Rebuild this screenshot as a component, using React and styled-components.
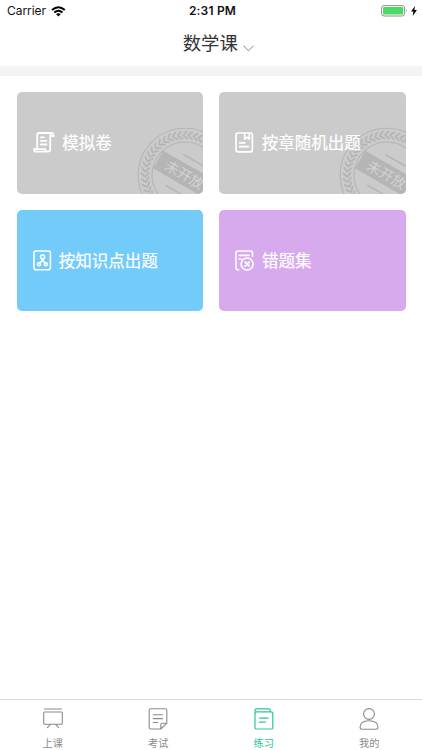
import React from "react";
import styled, { createGlobalStyle } from "styled-components";

const Global = createGlobalStyle`
  * { box-sizing: border-box; }
  body { margin: 0; background: #fff; }
`;

const Screen = styled.div`
  display: flex;
  flex-direction: column;
  width: 100%;
  height: 100vh;
  overflow: hidden;
  font-family: Roboto, "Noto Sans CJK SC", sans-serif;
  svg { display: block; flex: none; }
`;

const StatusBar = styled.div`
  display: grid;
  grid-template-columns: 1fr auto 1fr;
  align-items: center;
  height: 22px;
  padding: 0 5px 0 7px;
  font: 12px/22px Inter, sans-serif;
  color: #111;
`;

const Signal = styled.div`
  display: flex;
  align-items: center;
  gap: 5px;
  letter-spacing: -0.05px;
`;

const Clock = styled.div`
  font-weight: 600;
  letter-spacing: 0.2px;
  padding-left: 1px;
`;

const Power = styled.div`
  display: flex;
  justify-content: flex-end;
  align-items: center;
  gap: 3px;
`;

const Header = styled.header`
  display: flex;
  align-items: center;
  justify-content: center;
  gap: 5px;
  height: 43.5px;
  padding-left: 14.5px;
`;

const Title = styled.h1`
  margin: 0;
  font-size: 18.4px;
  line-height: 42px;
  font-weight: 400;
  color: #333;
`;

const Arrow = styled.svg`
  margin-top: 9px;
`;

const Divider = styled.div`
  height: 10px;
  background: #f4f4f4;
`;

const Cards = styled.main`
  flex: 1;
  display: grid;
  grid-template-columns: 1fr 1fr;
  grid-auto-rows: 101.5px;
  align-content: start;
  gap: 16px;
  padding: 16.5px;
`;

const Card = styled.div`
  position: relative;
  display: flex;
  align-items: center;
  gap: ${(p) => p.$gap}px;
  padding-left: 16px;
  border-radius: 5px;
  overflow: hidden;
  color: #fff;
  background: ${(p) => p.$color};
`;

const CardLabel = styled.span`
  position: relative;
  padding-top: 3px;
  font-size: 16.5px;
  line-height: 24px;
  font-weight: 400;
  -webkit-text-stroke: 0.2px currentColor;
  white-space: nowrap;
`;

const StampSvg = styled.svg`
  position: absolute;
  left: 120px;
  top: 34.5px;
`;

const TabBar = styled.nav`
  display: grid;
  grid-template-columns: repeat(4, 1fr);
  height: 51.5px;
  border-top: 1px solid #d9d9d9;
`;

const Tab = styled.div`
  display: flex;
  flex-direction: column;
  align-items: center;
  padding-top: 8px;
  gap: 7px;
  color: ${(p) => (p.$active ? "#2ec495" : "#8a8a8a")};
`;

const TabLabel = styled.span`
  font-size: 10.2px;
  line-height: 14px;
`;

const leaves = Array.from({ length: 48 }, (_, i) => (i * 360) / 48);

const Stamp = () => (
  <StampSvg width="96" height="96" viewBox="-48 -48 96 96" fill="none" stroke="#b5b5b5">
    <circle r="46.8" strokeWidth="1.1" />
    <circle r="33" strokeWidth="1.1" />
    {leaves.map((a) => (
      <path
        key={a}
        transform={`rotate(${a})`}
        d="M2.2-43.8Q-.4-42.4-1.8-39.6.4-37.8 2.8-36"
        strokeWidth="1.8"
      />
    ))}
    <g transform="rotate(30)">
      <path d="M-31-10.2H31V10.2H-31Z" fill="#b5b5b5" stroke="none" />
      <path d="M-12-17H20M-12 18.5H13" strokeWidth="1.4" />
      <text
        x="-0.5"
        y="5.2"
        textAnchor="middle"
        fontSize="14"
        fontFamily='"Noto Sans CJK SC", sans-serif'
        fill="#d2d2d2"
        stroke="none"
      >
        未开放
      </text>
    </g>
  </StampSvg>
);

const Icon = ({ w, h, sw = 1.5, children }) => (
  <svg
    width={w}
    height={h}
    viewBox={`0 0 ${w} ${h}`}
    fill="none"
    stroke="currentColor"
    strokeWidth={sw}
    strokeLinecap="round"
    strokeLinejoin="round"
  >
    {children}
  </svg>
);

const PaperIcon = () => (
  <Icon w={22} h={21} sw={1.8}>
    <path d="M4.2 16.5V3Q4.2 1 6.2 1H18.5Q20.6 1 20.6 4.2H17.2V17Q17.2 19.7 14.7 19.7H3Q1 19.7 1 17.2H12.3Q12.4 19.5 14.7 19.7M18.5 1Q17.2 1.5 17.2 4.4" />
    <path d="M7.8 5.3H11M7.8 8.8H13.5M7.8 12.5H13.5" />
  </Icon>
);

const BookmarkIcon = () => (
  <Icon w={19} h={21} sw={1.7}>
    <rect x="1" y="1" width="16.4" height="18.8" rx="2" />
    <path d="M9.7 1V7L12 5.3 14.3 7V1M4.7 10.8H9.8M4.7 14.7H13.4" />
  </Icon>
);

const KnowledgeIcon = () => (
  <Icon w={19} h={21} sw={1.6}>
    <rect x="1" y="1" width="16.4" height="18.8" rx="2" />
    <circle cx="9.6" cy="6.9" r="2" />
    <circle cx="6" cy="14.2" r="1.5" />
    <circle cx="12.8" cy="14.2" r="1.5" />
    <path d="M9.9 8.9Q9.8 11.2 6.7 12.8M9.8 10.2 12 12.9" />
  </Icon>
);

const WrongIcon = () => (
  <Icon w={20} h={21} sw={1.6}>
    <path d="M3.7 19.8H3Q1 19.8 1 17.8V3Q1 1 3 1H15.5Q17.5 1 17.5 3V6.2M4.2 5.4H14M4.2 9H6.4" />
    <circle cx="12.1" cy="14" r="6" />
    <path d="M10.2 12.1 14 15.9M14 12.1 10.2 15.9" strokeWidth="2" />
  </Icon>
);

const BoardIcon = () => (
  <Icon w={20} h={22} sw={1.1}>
    <path d="M1.5 1H18.5M1.5 4H18.5Q19.3 4 19.3 5V15.2Q19.3 16.2 18.3 16.2H1.7Q.7 16.2.7 15.2V5Q.7 4 1.5 4M7.3 16.5 4.4 19.7M12.7 16.5 15.6 19.7" />
  </Icon>
);

const ExamIcon = () => (
  <Icon w={20} h={22} sw={1.1}>
    <path d="M12.8 21H3Q1.2 21 1.2 19.2V2.2Q1.2.8 2.8.8H17Q18.8.8 18.8 2.5V15.2L12.8 21V16.5Q12.8 15.2 14.2 15.2H18.8M5.3 6.7H14.5M5.3 10.6H14.5M5.3 14.5H9.8" />
  </Icon>
);

const PracticeIcon = () => (
  <Icon w={20} h={22} sw={1.2}>
    <path d="M1 4V2Q1 .8 2.2.8H14.8Q16.2.8 16.2 2.2V3.7" />
    <rect x="1" y="3.8" width="17.8" height="17.2" rx="1.6" />
    <path d="M5.5 10.2H14M5.5 14.2H11.3" />
  </Icon>
);

const UserIcon = () => (
  <Icon w={20} h={22} sw={1.1}>
    <circle cx="10" cy="6" r="5.4" />
    <path d="M3 21.2Q1 21.2 1 19.5C1 15.2 4.5 12.7 10 12.7S19 15.2 19 19.5Q19 21.2 17 21.2Z" />
  </Icon>
);

const cards = [
  { label: "模拟卷", icon: PaperIcon, color: "#cbcbcb", gap: 7.7, closed: true },
  { label: "按章随机出题", icon: BookmarkIcon, color: "#cbcbcb", gap: 7.7, closed: true },
  { label: "按知识点出题", icon: KnowledgeIcon, color: "#73cbfa", gap: 7.3 },
  { label: "错题集", icon: WrongIcon, color: "#d6aaec", gap: 7 },
];

const tabs = [
  { label: "上课", icon: BoardIcon },
  { label: "考试", icon: ExamIcon },
  { label: "练习", icon: PracticeIcon, active: true },
  { label: "我的", icon: UserIcon },
];

export default function App() {
  return (
    <Screen>
      <Global />
      <StatusBar>
        <Signal>
          Carrier
          <svg width="15" height="11" viewBox="0 0 15 11" fill="none" stroke="#000" strokeWidth="2">
            <path d="M1 4.1Q7.4-1.7 13.8 4.1M3.3 6.6Q7.4 3 11.5 6.6" />
            <path d="M5 8.1Q7.4 6.2 9.8 8.1L7.4 10.5Z" fill="#000" stroke="none" />
          </svg>
        </Signal>
        <Clock>2:31 PM</Clock>
        <Power>
          <svg width="27" height="12" viewBox="0 0 27 12">
            <rect x=".6" y=".6" width="23" height="10.4" rx="2.4" fill="#fff" stroke="#929292" />
            <rect x="2" y="2" width="20.2" height="7.6" rx="1.2" fill="#4cd964" />
            <path d="M25 4Q26.5 5.8 25 7.6Z" fill="#929292" />
          </svg>
          <svg width="6" height="10" viewBox="0 0 6 10">
            <path d="M4 0 .1 5.5H2.4L1.7 10 5.9 4H3.4Z" fill="#000" />
          </svg>
        </Power>
      </StatusBar>
      <Header>
        <Title>数学课</Title>
        <Arrow width="11" height="7" viewBox="0 0 11 7" fill="none" stroke="#8a8a8a">
          <path d="M.5.7 5.5 5.8 10.5.7" />
        </Arrow>
      </Header>
      <Divider />
      <Cards>
        {cards.map(({ label, icon: Glyph, color, gap, closed }) => (
          <Card key={label} $color={color} $gap={gap}>
            {closed && <Stamp />}
            <Glyph />
            <CardLabel>{label}</CardLabel>
          </Card>
        ))}
      </Cards>
      <TabBar>
        {tabs.map(({ label, icon: Glyph, active }) => (
          <Tab key={label} $active={active}>
            <Glyph />
            <TabLabel>{label}</TabLabel>
          </Tab>
        ))}
      </TabBar>
    </Screen>
  );
}
